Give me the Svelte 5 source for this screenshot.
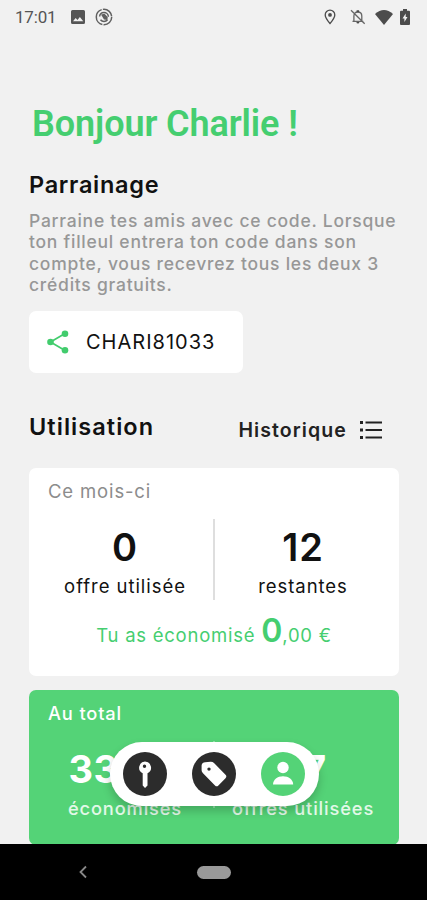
<script>
	let name = 'Charlie';
	let code = 'CHARI81033';

	let month = [
		{ value: '0', label: 'offre utilisée' },
		{ value: '12', label: 'restantes' }
	];

	let total = [
		{ value: '33,00', label: 'économisés' },
		{ value: '27', label: 'offres utilisées' }
	];
</script>

<div class="screen">
	<header class="status">
		<span class="time">17:01</span>
		<svg class="picture" width="14" height="14" viewBox="0 0 14 14">
			<path fill="#555" fill-rule="evenodd" d="M1.5 0h11A1.5 1.5 0 0 1 14 1.500v11a1.500 1.500 0 0 1-1.500 1.500h-11A1.500 1.500 0 0 1 0 12.500v-11A1.500 1.500 0 0 1 1.500 0zM2 11.300h10.200L8.900 6.900l-2.500 3.200-1.700-2.100z" />
		</svg>
		<svg class="sync" width="18" height="18" viewBox="0 0 18 18" fill="none" stroke="#606060">
			<circle cx="9" cy="9" r="7.700" stroke-width="1.500" stroke-dasharray="12.500 1.200 20 1.200" />
			<path stroke-width="1.500" d="M4.600 8.500A4.500 4.500 0 0 1 9 4.600a4.400 4.400 0 0 1 4.400 4.200M12.500 11.700A4.500 4.500 0 0 1 5.500 11.800" />
			<path fill="#606060" stroke="none" d="M6 6.500l3.500-.8 3.200 3.300-.3 3-3.400-.5z" />
		</svg>
		<div class="spacer"></div>
		<svg class="pin" width="12" height="16" viewBox="0 0 12 16" fill="none" stroke="#4c4c4c">
			<path stroke-width="1.300" d="M6 14.500C3.500 11.500 1.200 8.600 1.200 5.900a4.800 4.800 0 0 1 9.600 0c0 2.700-2.300 5.600-4.800 8.600z" />
			<circle cx="6" cy="5.900" r="1.900" fill="#4c4c4c" stroke="none" />
		</svg>
		<svg class="bell" width="16" height="16" viewBox="0 0 16 16" fill="none" stroke="#666" stroke-width="1.300">
			<path d="M3.900 12.300V7c0-2.400 1.300-4 3.900-4s4 1.600 4 4v5.300M2.500 12.300h10.800M1 1.300l13.700 13.500" />
			<path fill="#4c4c4c" stroke="none" d="M6.600 1.200h2.500v2H6.600zM6.400 13h3a1.500 1.500 0 0 1-3 0z" />
		</svg>
		<svg class="wifi" width="18" height="15" viewBox="0 0 18 15">
			<path fill="#4c4c4c" d="M0 4Q9-4 18 4L9 15z" />
		</svg>
		<svg class="battery" width="10" height="16" viewBox="0 0 10 16">
			<path fill="#4c4c4c" fill-rule="evenodd" d="M3 0h4v1.700h2q1 0 1 1V15q0 1-1 1H1q-1 0-1-1V2.700q0-1 1-1h2zM5.700 4.500L2.500 9.500h1.900v3.600L7.500 8H5.700z" />
		</svg>
	</header>

	<main>
		<h1>Bonjour {name} !</h1>

		<h2>Parrainage</h2>
		<p class="intro">
			Parraine tes amis avec ce code. Lorsque<br />
			ton filleul entrera ton code dans son<br />
			compte, vous recevrez tous les deux 3<br />
			crédits gratuits.
		</p>

		<button class="code">
			<svg width="22" height="24" viewBox="0 0 22 24">
				<path d="M18 3.500L3.500 12 18 20.500" fill="none" stroke="#42cc6d" stroke-width="1.700" />
				<g fill="#42cc6d">
					<circle cx="18" cy="3.700" r="3.300" />
					<circle cx="3.500" cy="12" r="3.300" />
					<circle cx="18" cy="20.300" r="3.300" />
				</g>
			</svg>
			<span>{code}</span>
		</button>

		<div class="heading">
			<h2>Utilisation</h2>
			<button class="history">
				<span>Historique</span>
				<svg width="22" height="18" viewBox="0 0 22 18" fill="#222">
					<path d="M0 0h3v3H0zM0 7.500h3v3H0zM0 15h3v3H0zM5.500.6H22v1.800H5.500zM5.500 8.100H22v1.800H5.500zM5.500 15.600H22v1.800H5.500z" />
				</svg>
			</button>
		</div>

		<section class="card">
			<h3>Ce mois-ci</h3>
			<div class="stats">
				{#each month as item}
					<div class="stat">
						<strong>{item.value}</strong>
						<span>{item.label}</span>
					</div>
				{/each}
			</div>
			<p class="saved">Tu as économisé <b>0</b>,00 €</p>
		</section>

		<section class="card green">
			<h3>Au total</h3>
			<div class="stats">
				{#each total as item}
					<div class="stat">
						<strong>{item.value}</strong>
						<span>{item.label}</span>
					</div>
				{/each}
			</div>
		</section>
	</main>

	<nav class="tabs">
		<button aria-label="Clé">
			<svg width="44" height="44" viewBox="0 0 44 44">
				<path fill="#fff" fill-rule="evenodd" d="M22 9.500a6.200 6.200 0 0 1 2.500 11.800V33.500L22 36l-2.300-2.500V21.300A6.200 6.200 0 0 1 22 9.500zM21.500 12.500a1.700 1.700 0 1 0 0 3.400 1.700 1.700 0 0 0 0-3.400z" />
			</svg>
		</button>
		<button aria-label="Offres">
			<svg width="44" height="44" viewBox="0 0 44 44">
				<path fill="#fff" fill-rule="evenodd" d="M13 10.300L18.500 9.700q2-.2 3.500 1.300L33.500 22.800q1.700 1.700 0 3.400L26.400 33.500q-1.700 1.700-3.400 0L11 21.300Q9.500 19.800 9.600 18V13.500Q9.800 10.700 13 10.300zM17 15.400a1.700 1.700 0 1 0 0 3.400 1.700 1.700 0 0 0 0-3.400z" />
			</svg>
		</button>
		<button class="active" aria-label="Profil">
			<svg width="44" height="44" viewBox="0 0 44 44" fill="#fff">
				<circle cx="22" cy="15.500" r="5.700" />
				<path d="M12 32.500c0-5 4.500-8.300 10-8.300s10.200 3.300 10.200 8.300z" />
			</svg>
		</button>
	</nav>

	<footer>
		<svg width="10" height="14" viewBox="0 0 10 14">
			<path d="M8 1.500L2.500 7 8 12.500" fill="none" stroke="#888" stroke-width="1.800" />
		</svg>
		<div class="home"></div>
	</footer>
</div>

<style>
	:global(body) {
		background: #f1f1f1;
	}

	.screen {
		position: relative;
		display: flex;
		flex-direction: column;
		width: 427px;
		height: 900px;
		overflow: hidden;
		background: #f1f1f1;
		color: #111;
		font-family: Inter, sans-serif;
	}

	h1, h2, h3, p {
		margin: 0;
	}

	button {
		margin: 0;
		padding: 0;
		border: 0;
		background: none;
		color: inherit;
		font: inherit;
	}

	svg {
		display: block;
		flex: none;
	}

	.status {
		display: flex;
		align-items: center;
		height: 34px;
		padding: 0 17px 0 15px;
		flex: none;
	}

	.time {
		width: 56px;
		font: 400 17px/34px Roboto, sans-serif;
		letter-spacing: -0.2px;
		color: #555;
	}

	.sync {
		margin-left: 10px;
	}

	.spacer {
		flex: 1;
	}

	.bell {
		margin-left: 14px;
	}

	.wifi {
		margin-left: 9px;
	}

	.battery {
		margin-left: 7px;
	}

	main {
		display: flex;
		flex-direction: column;
		flex: 1;
		min-height: 0;
		padding: 0 28px 0 29px;
		overflow: hidden;
	}

	h1 {
		padding: 69px 0 0 3px;
		font: 600 36px/42px Roboto, sans-serif;
		letter-spacing: -0.1px;
		color: #45ce70;
		white-space: nowrap;
	}

	h2 {
		font-size: 23.500px;
		line-height: 28px;
		font-weight: 600;
		letter-spacing: 0.700px;
	}

	h1 + h2 {
		margin-top: 26px;
	}

	.intro {
		margin-top: 11px;
		font-size: 17.500px;
		line-height: 21.300px;
		font-weight: 450;
		letter-spacing: 0.750px;
		color: #979797;
		white-space: nowrap;
	}

	.code {
		display: flex;
		align-items: center;
		flex: none;
		gap: 17px;
		width: 214px;
		height: 61.600px;
		margin-top: 16px;
		padding-left: 18px;
		border-radius: 7px;
		background: #fff;
		font-size: 20px;
		letter-spacing: 1px;
	}

	.heading {
		display: flex;
		justify-content: space-between;
		flex: none;
		margin-top: 40.500px;
		padding-right: 17px;
	}

	.heading h2 {
		letter-spacing: 1.050px;
	}

	.history {
		display: flex;
		align-items: center;
		gap: 13px;
		height: 34px;
		font-size: 19.500px;
		font-weight: 600;
		letter-spacing: 1.100px;
		color: #222;
	}

	.card {
		flex: none;
		height: 208px;
		margin-top: 21px;
		border-radius: 7px;
		background: #fff;
	}

	h3 {
		padding: 12px 0 0 19px;
		font-size: 18.500px;
		line-height: 22px;
		font-weight: 400;
		letter-spacing: 0.850px;
		color: #8c8c8c;
	}

	.stats {
		display: flex;
		height: 81px;
		margin-top: 17px;
		padding: 0 8px;
	}

	.stat {
		display: flex;
		flex-direction: column;
		align-items: center;
		flex: 1 1 0;
	}

	.stat + .stat {
		border-left: 2px solid #dedede;
	}

	.stat strong {
		margin-top: 5px;
		font-size: 38px;
		line-height: 46px;
		font-weight: 600;
		letter-spacing: 1px;
	}

	.stat span {
		margin-top: 5px;
		font-size: 18.500px;
		line-height: 22px;
		letter-spacing: 0.950px;
		white-space: nowrap;
	}

	.saved {
		margin-top: 11px;
		font-size: 18.500px;
		line-height: 40px;
		letter-spacing: 0.750px;
		text-align: center;
		color: #45ce70;
	}

	.saved b {
		font-size: 32px;
		font-weight: 600;
		letter-spacing: 0;
	}

	.green {
		height: 155px;
		margin-top: 14px;
		background: #54d377;
		color: #fff;
	}

	.green h3 {
		color: #fff;
		font-size: 18.300px;
		font-weight: 500;
	}

	.green .stats {
		height: 67px;
	}

	.green .stat + .stat {
		border-color: #8de3a5;
	}

	.green .stat strong {
		font-weight: 700;
		letter-spacing: 0.400px;
	}

	.green .stat span {
		color: #e2f8e8;
		font-size: 18.300px;
		font-weight: 500;
		letter-spacing: 0.850px;
	}

	/* floats over the cards */
	.tabs {
		position: absolute;
		left: 110px;
		top: 742px;
		display: flex;
		align-items: center;
		justify-content: space-between;
		box-sizing: border-box;
		width: 209px;
		height: 64px;
		padding: 0 14px 0 13px;
		border-radius: 32px;
		background: #fff;
		box-shadow: 0 5px 10px rgba(0, 0, 0, 0.2);
	}

	.tabs button {
		width: 44px;
		height: 44px;
		border-radius: 50%;
		background: #2c2c2c;
	}

	.tabs .active {
		background: #54d377;
	}

	footer {
		display: flex;
		align-items: center;
		height: 56px;
		padding-left: 78px;
		flex: none;
		background: #000;
	}

	.home {
		width: 34px;
		height: 13px;
		margin-left: 109px;
		border-radius: 7px;
		background: #999;
	}
</style>
